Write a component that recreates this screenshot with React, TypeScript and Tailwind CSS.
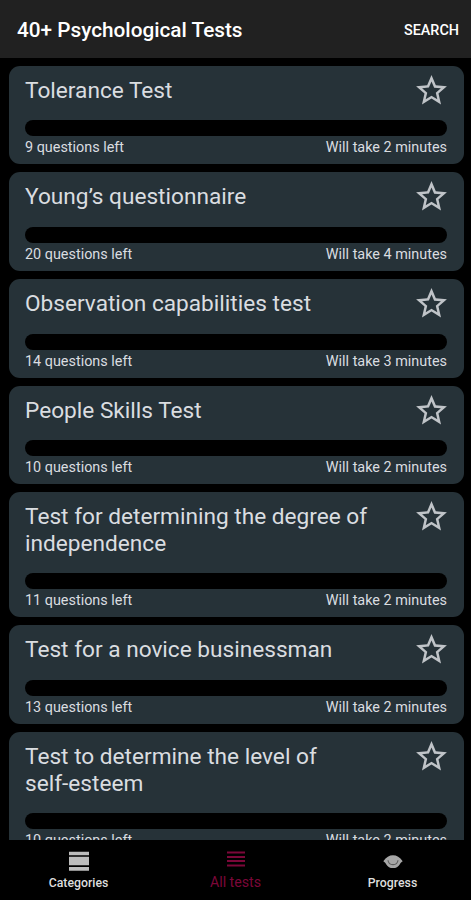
type Test = {
  title: string;
  questions: number;
  minutes: number;
};

const tests: Test[] = [
  { title: "Tolerance Test", questions: 9, minutes: 2 },
  { title: "Young’s questionnaire", questions: 20, minutes: 4 },
  { title: "Observation capabilities test", questions: 14, minutes: 3 },
  { title: "People Skills Test", questions: 10, minutes: 2 },
  { title: "Test for determining the degree of independence", questions: 11, minutes: 2 },
  { title: "Test for a novice businessman", questions: 13, minutes: 2 },
  { title: "Test to determine the level of\nself-esteem", questions: 10, minutes: 2 },
];

function StarIcon() {
  return (
    <svg viewBox="0 0 24 24" className="-mt-[6px] -mr-[3px] size-[37px] shrink-0 fill-[#c0c4c8]">
      <path d="M22 9.24l-7.19-.62L12 2 9.19 8.63 2 9.24l5.46 4.73L5.82 21 12 17.27 18.18 21l-1.63-7.03L22 9.24zM12 15.4l-3.76 2.27 1-4.28-3.32-2.88 4.38-.38L12 6.1l1.71 4.04 4.38.38-3.32 2.88 1 4.28L12 15.4z" />
    </svg>
  );
}

function CategoriesIcon() {
  return (
    <svg viewBox="0 0 20 20" className="h-5 w-5 fill-[#bdbdbd]">
      <path d="M0 0.7h20v3.6H0zM0 5.8h20v8.4H0zM0 15.9h20v3.8H0z" />
    </svg>
  );
}

function ListIcon() {
  return (
    <svg viewBox="0 0 18 20" className="h-5 w-[18px] fill-[#7c0739]">
      <path d="M0 0.6h18v2H0zM0 4.9h18v2H0zM0 9.1h18v2H0zM0 13.4h18v2H0z" />
    </svg>
  );
}

function EyeIcon() {
  return (
    <svg viewBox="0 0 20 20" className="h-5 w-5">
      <path d="M0.3 10.2C3.2 6 6.3 4.3 10 4.3s6.8 1.7 9.7 5.9c-1.6 1-2.3 2-3 3.2-1.5 2.4-3.6 3.6-6.7 3.6s-5.2-1.2-6.7-3.6c-.7-1.2-1.4-2.2-3-3.2z" fill="#a6a6a6" />
      <path d="M5 9.2c.4 3 2.4 4.4 5 4.4s4.6-1.4 5-4.4" fill="none" stroke="#5c5c5c" strokeWidth="1.1" />
    </svg>
  );
}

function TestCard({ test }: { test: Test }) {
  return (
    <div className="shrink-0 rounded-[11px] bg-[#263238] px-[16.5px] pt-3 pb-[7px]">
      <div className="flex items-start justify-between">
        <h2 className="w-[350px] pb-[16.2px] text-[22.65px] leading-[26.5px] whitespace-pre-line text-[#dadde0]">
          {test.title}
        </h2>
        <StarIcon />
      </div>
      <div className="h-4 rounded-full bg-black" />
      <div className="mt-[3px] flex justify-between text-[14.4px] leading-[18px] text-[#dadde0]">
        <span>{test.questions} questions left</span>
        <span>Will take {test.minutes} minutes</span>
      </div>
    </div>
  );
}

export default function App() {
  return (
    <div className="flex h-[900px] w-[471px] flex-col overflow-hidden bg-black font-['Roboto',sans-serif]">
      <header className="flex h-[58px] shrink-0 items-center justify-between bg-[#212121] pr-3 pl-[17px] pt-[3px] text-white">
        <h1 className="text-[20.75px] font-medium">40+ Psychological Tests</h1>
        <button className="text-[14.4px] font-medium">SEARCH</button>
      </header>

      <main className="flex min-h-0 flex-1 flex-col gap-2 overflow-hidden pt-[7.5px] pr-[7.5px] pl-[8.5px]">
        {tests.map((test) => (
          <TestCard key={test.title} test={test} />
        ))}
      </main>

      <nav className="grid h-[60px] shrink-0 grid-cols-3 bg-black pt-[10.5px] text-[12.3px] leading-4 text-[#dedede]">
        <button className="flex flex-col items-center gap-1">
          <CategoriesIcon />
          <span className="font-medium">Categories</span>
        </button>
        <button className="flex flex-col items-center gap-[3px] text-[#7c0739]">
          <ListIcon />
          <span className="text-[14.2px]">All tests</span>
        </button>
        <button className="flex flex-col items-center gap-1">
          <EyeIcon />
          <span className="font-medium">Progress</span>
        </button>
      </nav>
    </div>
  );
}
